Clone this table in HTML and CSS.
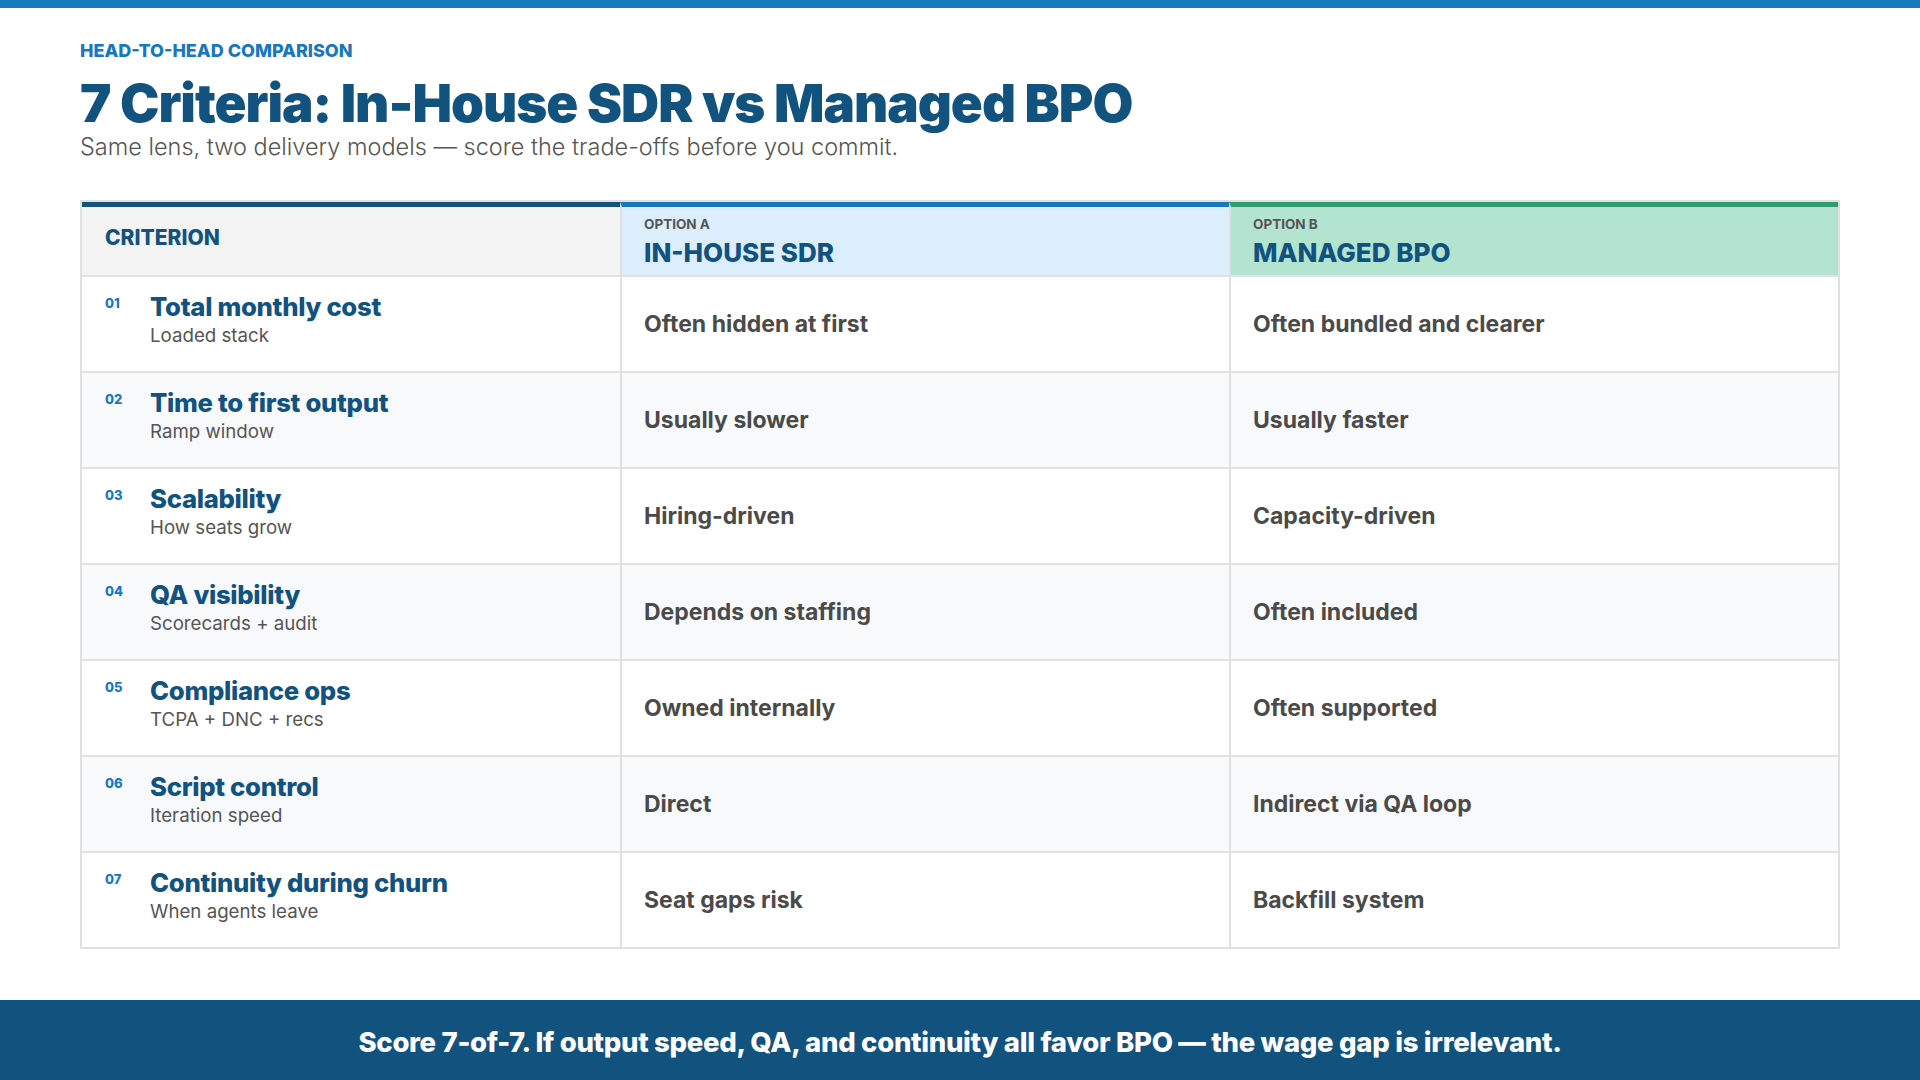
FILE: index.html
```html
<!DOCTYPE html>
<html lang="en">
<head>
<meta charset="utf-8">
<title>7 Criteria: In-House SDR vs Managed BPO</title>
<link rel="stylesheet" href="styles.css">
</head>
<body>
<div class="topbar"></div>
<main class="page">
  <header class="intro">
    <div class="eyebrow">HEAD-TO-HEAD COMPARISON</div>
    <h1 class="title">7 Criteria: In-House SDR vs Managed BPO</h1>
    <p class="subtitle">Same lens, two delivery models — score the trade-offs before you commit.</p>
  </header>

  <section class="table">
    <div class="hcell hc-crit"><span class="hlabel">CRITERION</span></div>
    <div class="hcell hc-a"><span class="opt">OPTION A</span><span class="optname">IN-HOUSE SDR</span></div>
    <div class="hcell hc-b"><span class="opt">OPTION B</span><span class="optname">MANAGED BPO</span></div>

    <div class="cell crit"><span class="num">01</span><div class="ctext"><div class="cname">Total monthly cost</div><div class="csub">Loaded stack</div></div></div>
    <div class="cell val">Often hidden at first</div>
    <div class="cell val">Often bundled and clearer</div>

    <div class="cell crit alt"><span class="num">02</span><div class="ctext"><div class="cname">Time to first output</div><div class="csub">Ramp window</div></div></div>
    <div class="cell val alt">Usually slower</div>
    <div class="cell val alt">Usually faster</div>

    <div class="cell crit"><span class="num">03</span><div class="ctext"><div class="cname">Scalability</div><div class="csub">How seats grow</div></div></div>
    <div class="cell val">Hiring-driven</div>
    <div class="cell val">Capacity-driven</div>

    <div class="cell crit alt"><span class="num">04</span><div class="ctext"><div class="cname">QA visibility</div><div class="csub">Scorecards + audit</div></div></div>
    <div class="cell val alt">Depends on staffing</div>
    <div class="cell val alt">Often included</div>

    <div class="cell crit"><span class="num">05</span><div class="ctext"><div class="cname">Compliance ops</div><div class="csub">TCPA + DNC + recs</div></div></div>
    <div class="cell val">Owned internally</div>
    <div class="cell val">Often supported</div>

    <div class="cell crit alt"><span class="num">06</span><div class="ctext"><div class="cname">Script control</div><div class="csub">Iteration speed</div></div></div>
    <div class="cell val alt">Direct</div>
    <div class="cell val alt">Indirect via QA loop</div>

    <div class="cell crit"><span class="num">07</span><div class="ctext"><div class="cname">Continuity during churn</div><div class="csub">When agents leave</div></div></div>
    <div class="cell val">Seat gaps risk</div>
    <div class="cell val">Backfill system</div>
  </section>
</main>
<footer class="footer">Score 7-of-7. If output speed, QA, and continuity all favor BPO — the wage gap is irrelevant.</footer>
</body>
</html>
```
FILE: styles.css
```css
* { box-sizing: border-box; }
html, body { margin: 0; padding: 0; }
body {
  width: 1920px;
  height: 1080px;
  background: #ffffff;
  font-family: "Inter", "Open Sans", sans-serif;
  display: flex;
  flex-direction: column;
  overflow: hidden;
}
.topbar { height: 8px; background: #1777bf; flex: none; }
.page {
  flex: 1;
  padding: 0 80px;
  display: flex;
  flex-direction: column;
}
.intro { padding-top: 32px; }
.eyebrow {
  font-size: 18px;
  font-weight: 800;
  color: #1777bf;
  line-height: 22px;
  letter-spacing: 0;
}
.title {
  margin: 11px 0 0 0;
  font-size: 52.8px;
  font-weight: 900;
  color: #12527f;
  line-height: 60px;
  letter-spacing: -1px;
}
.subtitle {
  margin: 0;
  font-size: 23.5px;
  font-weight: 300;
  color: #555555;
  line-height: 28px;
}
.table {
  margin-top: 39px;
  border: 2px solid #e0e0e0;
  display: grid;
  grid-template-columns: 538px 1fr 1fr;
  grid-template-rows: 73px repeat(7, 96px);
}
.hcell {
  border-top: 5px solid #12527f;
  display: flex;
  flex-direction: column;
  justify-content: flex-start;
  padding: 9px 22px 0 22px;
}
.hc-crit { background: #f3f3f3; padding: 18px 0 0 23px; }
.hc-a { background: #dcedfc; border-top-color: #1777bf; border-left: 2px solid #e0e0e0; }
.hc-b { background: #b3e4d0; border-top-color: #2f9e6f; border-left: 2px solid #e0e0e0; }
.hlabel {
  font-size: 21px;
  font-weight: 800;
  color: #12527f;
  line-height: 26px;
}
.opt {
  font-size: 13.5px;
  font-weight: 700;
  color: #555555;
  line-height: 16px;
}
.optname {
  margin-top: 6px;
  font-size: 26px;
  font-weight: 800;
  color: #12527f;
  line-height: 30px;
}
.cell {
  border-top: 2px solid #e2e2e2;
  background: #ffffff;
}
.cell.alt { background: #f8f9fb; }
.crit {
  display: flex;
  align-items: flex-start;
  padding: 14px 0 0 23px;
}
.num {
  width: 45px;
  flex: none;
  margin-top: 3px;
  font-size: 13px;
  font-weight: 800;
  color: #1777bf;
  line-height: 18px;
}
.cname {
  font-size: 25.7px;
  font-weight: 800;
  color: #12527f;
  line-height: 32px;
  letter-spacing: -0.3px;
}
.csub {
  font-size: 18.7px;
  font-weight: 400;
  color: #555555;
  line-height: 24px;
  margin-top: 1px;
}
.val {
  border-left: 2px solid #e0e0e0;
  display: flex;
  align-items: center;
  padding: 0 22px;
  font-size: 23px;
  font-weight: 700;
  color: #4a4a4a;
}
.footer {
  flex: none;
  height: 80px;
  padding-top: 4px;
  background: #12527f;
  color: #ffffff;
  font-size: 27.5px;
  font-weight: 800;
  display: flex;
  align-items: center;
  justify-content: center;
  letter-spacing: -0.3px;
}
```
